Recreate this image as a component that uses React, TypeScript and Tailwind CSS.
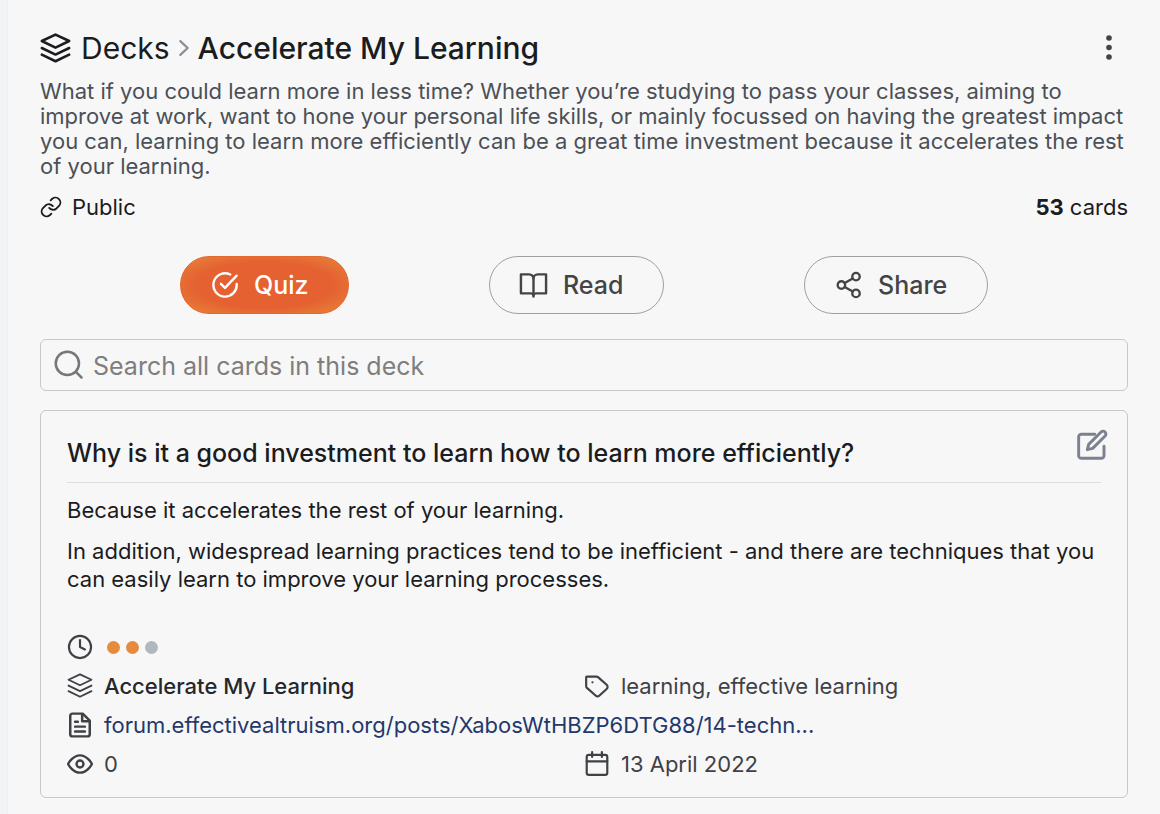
import React from 'react';

interface IconProps {
  className?: string;
  strokeWidth?: number;
  children: React.ReactNode;
}

const Icon: React.FC<IconProps> = ({ className = 'size-6', strokeWidth = 2, children }) => (
  <svg
    viewBox="0 0 24 24"
    fill="none"
    stroke="currentColor"
    strokeWidth={strokeWidth}
    strokeLinecap="round"
    strokeLinejoin="round"
    aria-hidden="true"
    className={`shrink-0 ${className}`}
  >
    {children}
  </svg>
);

const LayersIcon = ({ className, strokeWidth = 1.7 }: { className?: string; strokeWidth?: number }) => (
  <Icon className={className} strokeWidth={strokeWidth}>
    <path d="M12 1.200 22.600 6.200 12 11.300 1.400 6.200Z" />
    <path d="M1.400 11.600 12 16.700l10.600-5.100" />
    <path d="M1.400 16.800 12 21.900l10.600-5.100" />
  </Icon>
);

const tags = ['learning', 'effective learning'];
const difficulty = [true, true, false];

const Header = () => (
  <header>
    <div className="flex items-center justify-between">
      <div className="flex items-center text-[30px] leading-9">
        <a href="#decks" className="flex items-center gap-[10px]">
          <LayersIcon className="size-[31px]" strokeWidth={2} />
          Decks
        </a>
        <Icon className="mx-[3px] size-[22px] text-[#8a8d98]" strokeWidth={2.4}>
          <path d="M8 4.500l8 7.500-8 7.500" />
        </Icon>
        <h1 className="font-medium">Accelerate My Learning</h1>
      </div>
      <button type="button" aria-label="More options" className="flex h-8 w-[38px] items-center justify-center">
        <svg viewBox="0 0 6 26" className="h-[26px] w-[6px] fill-[#444]" aria-hidden="true">
          <circle cx="3" cy="3" r="2.800" />
          <circle cx="3" cy="12.500" r="2.800" />
          <circle cx="3" cy="22" r="2.800" />
        </svg>
      </button>
    </div>
    <p className="mt-[13px] text-[22px] leading-[25px] text-[#4b5057]">
      What if you could learn more in less time? Whether you’re studying to pass your classes, aiming to improve at
      work, want to hone your personal life skills, or mainly focussed on having the greatest impact you can, learning
      to learn more efficiently can be a great time investment because it accelerates the rest of your learning.
    </p>
    <div className="mt-[14px] flex items-center justify-between text-[22px] leading-7">
      <span className="flex items-center gap-[10px]">
        <Icon className="size-[22px]">
          <path d="M10 13a5.500 5.500 0 0 0 8 .6l3-3a5.400 5.400 0 0 0-7.600-7.600l-1.800 1.800" />
          <path d="M14 11a5.500 5.500 0 0 0-8-.6l-3 3a5.400 5.400 0 0 0 7.600 7.600l1.800-1.800" />
        </Icon>
        Public
      </span>
      <span>
        <strong className="font-bold">53</strong> cards
      </span>
    </div>
  </header>
);

const Actions = () => (
  <div className="mt-[35px] flex justify-evenly text-[25px] font-medium text-[#444]">
    <button
      type="button"
      className="flex h-[58px] w-[169px] items-center gap-[15px] rounded-full border border-[#e56732] bg-[radial-gradient(ellipse_at_center,#e56132_58%,#e58037_92%)] pl-[30px] text-white"
    >
      <Icon className="size-7">
        <path d="M16.500 3A10 10 0 1 0 22 11" />
        <path d="M8.500 11l3.500 3.500L22 4" />
      </Icon>
      <span className="pt-[2px]">Quiz</span>
    </button>
    <button
      type="button"
      className="flex h-[58px] w-[175px] items-center gap-[15px] rounded-full border border-[#a0a0a0] pl-[29px]"
    >
      <Icon className="size-[29px]">
        <path d="M1.600 2.800h6.900A3.500 3.500 0 0 1 12 6.300a3.500 3.500 0 0 1 3.500-3.500h6.900v15.700h-8.200a2.200 2.200 0 0 0-2.200 1.600 2.200 2.200 0 0 0-2.200-1.600H1.600Z" />
        <path d="M12 6.500v14.700" />
      </Icon>
      <span className="pt-[2px]">Read</span>
    </button>
    <button
      type="button"
      className="flex h-[58px] w-[184px] items-center gap-[15px] rounded-full border border-[#a0a0a0] pl-[30px]"
    >
      <Icon className="size-7">
        <circle cx="18" cy="4.800" r="3.200" />
        <circle cx="5.500" cy="12" r="3.200" />
        <circle cx="18" cy="19.200" r="3.200" />
        <path d="M8.300 13.700l6.900 3.900M15.200 6.400l-6.900 3.900" />
      </Icon>
      <span className="pt-[2px]">Share</span>
    </button>
  </div>
);

const SearchBox = () => (
  <label className="mt-[25px] flex h-[52px] items-center gap-[9px] rounded-md border border-[#c6c8cc] px-[13px] text-[#777]">
    <Icon className="size-[30px]">
      <circle cx="10.700" cy="10.700" r="9.300" />
      <path d="M17.500 17.500l4.500 4.500" />
    </Icon>
    <input
      type="text"
      aria-label="Search all cards in this deck"
      placeholder="Search all cards in this deck"
      className="min-w-0 flex-1 bg-transparent pt-[3px] text-[25px] outline-none placeholder:text-[#7e7e7e]"
    />
  </label>
);

const Card = () => (
  <article className="mt-[19px] rounded-md border border-[#c6c8cc] bg-[#f7f7f8] px-[26px] pt-[25px] pb-[17px]">
    <div className="flex items-start justify-between border-b border-[#dcdddf] pb-3">
      <h2 className="text-[25px] leading-[34px] font-medium">
        Why is it a good investment to learn how to learn more efficiently?
      </h2>
      <button type="button" aria-label="Edit card" className="-mt-[7px] -mr-[7px] text-[#7b818f]">
        <Icon className="size-8" strokeWidth={2.2}>
          <path d="M14 4H4a2 2 0 0 0-2 2v14a2 2 0 0 0 2 2h15a2 2 0 0 0 2-2v-7" />
          <path d="M18.800 2.300a2.100 2.100 0 0 1 3 3L12.500 14.500l-4 1 1-4Z" />
        </Icon>
      </button>
    </div>
    <div className="mt-[13px] space-y-[13px] text-[22px] leading-7">
      <p>Because it accelerates the rest of your learning.</p>
      <p>
        In addition, widespread learning practices tend to be inefficient - and there are techniques that you can easily
        learn to improve your learning processes.
      </p>
    </div>
    <div className="mt-[38px] grid grid-cols-2 gap-y-[7px] text-[22px] leading-8 text-[#3f4146]">
      <div className="col-span-2 flex h-8 items-center">
        <Icon className="mr-[14px] size-[26px]">
          <circle cx="12" cy="12" r="10.200" />
          <path d="M12 5.500V12l4.500 2.300" />
        </Icon>
        <div className="flex gap-[6px]" role="img" aria-label="Difficulty 2 of 3">
          {difficulty.map((filled, i) => (
            <span key={i} className={`size-[13px] rounded-full ${filled ? 'bg-[#e68a3c]' : 'bg-[#b0b8bd]'}`} />
          ))}
        </div>
      </div>
      <div className="flex items-center gap-[11px] font-medium text-[#25272b]">
        <LayersIcon className="size-[26px] text-[#3f4146]" />
        Accelerate My Learning
      </div>
      <div className="flex items-center gap-[11px]">
        <Icon className="size-[26px]">
          <path d="M2.600 3.400h9a2.500 2.500 0 0 1 1.600.6l7.700 6.900a2.600 2.600 0 0 1 0 3.900l-6.600 6a2.600 2.600 0 0 1-3.600 0l-8-7.100a2 2 0 0 1-.7-1.500V4a.6.600 0 0 1 .6-.6Z" />
          <path d="M7.800 8.600h.01" />
        </Icon>
        {tags.join(', ')}
      </div>
      <div className="col-span-2 flex items-center gap-[11px]">
        <Icon className="size-[26px]" strokeWidth={2.3}>
          <path d="M14.500 1.500H5a2 2 0 0 0-2 2v17a2 2 0 0 0 2 2h14a2 2 0 0 0 2-2V8Z" />
          <path d="M14 2v6.500h6.500M7.500 9h2.500M7.500 13.500h9M7.500 18h9" />
        </Icon>
        <a
          href="https://forum.effectivealtruism.org/posts/XabosWtHBZP6DTG88/14-techn"
          className="truncate text-[#24386b]"
        >
          forum.effectivealtruism.org/posts/XabosWtHBZP6DTG88/14-techn...
        </a>
      </div>
      <div className="flex items-center gap-[11px]">
        <Icon className="size-[26px]" strokeWidth={2.2}>
          <path d="M1 12S5 4 12 4s11 8 11 8-4 8-11 8S1 12 1 12Z" />
          <circle cx="12" cy="12" r="3.200" />
        </Icon>
        0
      </div>
      <div className="flex items-center gap-[11px]">
        <Icon className="size-[26px]">
          <rect x="2.500" y="3.500" width="19" height="18.500" rx="2" />
          <path d="M2.500 9.500h19M7.500 1v4.500M16.500 1v4.500" />
        </Icon>
        <time dateTime="2022-04-13">13 April 2022</time>
      </div>
    </div>
  </article>
);

const App: React.FC = () => {
  return (
    <div className="min-h-screen border-l-[7px] border-[#f3f4f6] bg-[#f7f7f7] font-['Inter','Liberation_Sans',sans-serif] text-[#1b1c20]">
      <main className="border-l border-[#eeeff1] pt-[30px] pr-8 pb-4 pl-8">
        <Header />
        <Actions />
        <SearchBox />
        <Card />
      </main>
    </div>
  );
};

export default App;
